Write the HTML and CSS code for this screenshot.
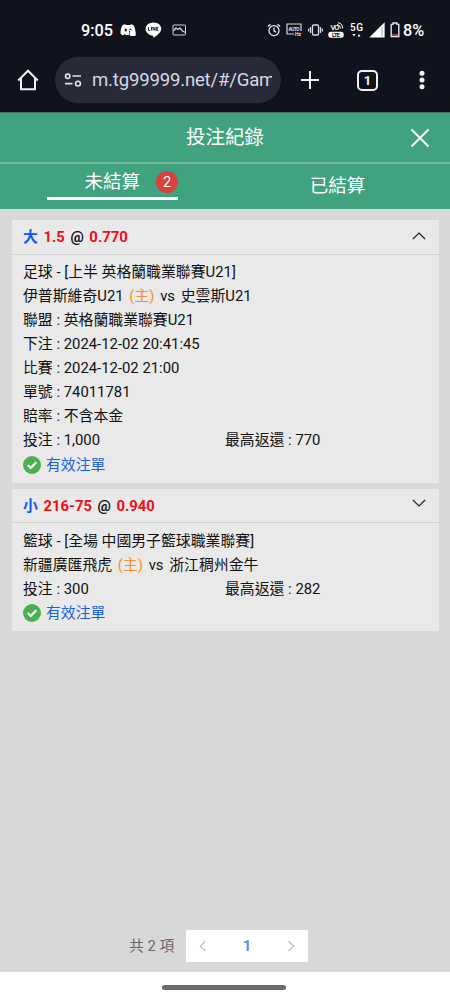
FILE: index.html
```html
<!DOCTYPE html>
<html lang="zh-Hant">
<head>
<meta charset="utf-8">
<meta name="viewport" content="width=device-width, initial-scale=1">
<title>投注紀錄</title>
<link rel="stylesheet" href="styles.css">
</head>
<body>
<div class="screen">
  <div class="status">
    <div class="status-left">
      <span class="clock">9:05</span>
      <svg class="i-discord" width="16" height="14" viewBox="0 0 16 14"><path d="M5 1.200 6 2h4l1-.8 2.400.9C14.600 4 15.300 6 15.300 8H9v4H6L4.500 11 3 12.500.600 11C.300 7.500 1.200 4.500 2.600 2.100Z" fill="#fff"/><ellipse cx="5.700" cy="7" rx="1.200" ry="1.500" fill="#11131c"/><path d="M9 7.200a1.300 1.300 0 0 1 2.500 0" fill="none" stroke="#11131c"/><rect x="9.700" y="8" width="6" height="5" rx="1" fill="#fff"/></svg>
      <svg class="i-line" width="17" height="16" viewBox="0 0 17 16"><path d="M8.500.400C13 .400 16.300 3.200 16.300 6.800c0 3.500-4.200 6.500-7.500 8.800-.6.300-.7-.4-.5-1.900C4 13.500.600 10.600.600 6.800.600 3.200 4.100.400 8.500.400Z" fill="#fff"/><path d="M3.500 5v3.500h1.700M6.500 5v3.500M8 8.500V5l2 3.500V5M13.300 5.200h-1.700v3.200h1.700M11.600 6.800h1.500" fill="none" stroke="#11131c" stroke-width=".9"/></svg>
      <svg class="i-pic" width="15" height="12" viewBox="0 0 15 12" fill="none" stroke="#cfd0d6"><rect x="1" y="1" width="12.500" height="10" rx=".8"/><path d="m1.500 7 2.500-3 2 1.500L8 4l2.500 3 3 1.500" stroke-width="1.300"/></svg>
    </div>
    <div class="status-right">
      <svg class="i-alarm" width="14" height="14" viewBox="0 0 14 14" fill="none" stroke="#e8e9ee" stroke-width="1.300"><circle cx="7" cy="7.600" r="5"/><path d="M7 4.500v3.400l2 1.200M.900 3.500 3.500 1.200M13.100 3.500 10.500 1.200"/></svg>
      <svg class="i-auto" width="16" height="14" viewBox="0 0 16 14"><path d="M8 11H1V1h14v7" fill="none" stroke="#d8d9df" stroke-width="1.200"/><text x="2.500" y="7.500" font-size="4.600" textLength="11">AUTO</text><text x="9" y="13" font-size="5" textLength="6">Hz</text></svg>
      <svg class="i-vib" width="15" height="12" viewBox="0 0 15 12" fill="none" stroke="#d8d9df" stroke-width="1.300"><rect x="4.500" y="1" width="6" height="10" rx="1"/><path d="M2.600 3v6M12.400 3v6M.700 4.500v3M14.300 4.500v3"/></svg>
      <svg class="i-volte" width="16" height="17" viewBox="0 0 16 17"><text x="2.500" y="8" font-size="7.500" textLength="9">VO</text><path d="M9 2.500a4 4 0 0 1 3.500 4M10 .700a5.500 5.500 0 0 1 4.500 5.800" fill="none" stroke="#fff"/><rect x=".3" y="9.700" width="15.400" height="6" rx="2.500" fill="#fff"/><text x="4" y="15" font-size="5.600" class="dark" textLength="8">LTE</text></svg>
      <svg class="i-5g" width="15" height="16" viewBox="0 0 15 16"><text x="1" y="9" font-size="10" textLength="13">5G</text><path d="M3.500 12h3L5 14.500ZM8.500 14.500h3L10 12Z" fill="#fff"/></svg>
      <svg class="i-signal" width="16" height="16" viewBox="0 0 16 16"><path d="M.3 15.500 15.600.300v15.200Z" fill="#fff"/><path d="M13 5v9.500" stroke="#8f9097" stroke-width=".8"/></svg>
      <svg class="i-batt" width="10" height="16" viewBox="0 0 10 16"><path d="M3 2.400V1h4v1.400h1.800v12.200H1.200V2.400Z" fill="none" stroke="#e4e4e8" stroke-width="1.400"/><path d="M2 13h6" stroke="#b7623e" stroke-width="1.500"/></svg>
      <span class="pct">8%</span>
    </div>
  </div>
  <div class="browser">
    <svg class="i-home" width="22" height="22" viewBox="0 0 22 22" fill="none" stroke="#f1f1f3" stroke-width="2"><path d="M1.200 11.500 11 1.700l9.800 9.800M4 9v11.300h14V9"/></svg>
    <div class="url">
      <svg width="18" height="14" viewBox="0 0 18 14" fill="none" stroke="#e3e4ea" stroke-width="1.600"><circle cx="3.700" cy="3.300" r="2.200"/><path d="M8.500 3H17M1 10.600h7.500"/><circle cx="14" cy="10.600" r="2.400"/></svg>
      <span class="url-text">m.tg99999.net/#/Gam</span>
    </div>
    <svg class="i-plus" width="18" height="18" viewBox="0 0 18 18"><path d="M9 0v18M0 9h18" stroke="#f1f1f3" stroke-width="2"/></svg>
    <span class="tabcount">1</span>
    <svg class="i-more" width="6" height="20" viewBox="0 0 6 20" fill="#f1f1f3"><circle cx="3" cy="3.300" r="2.500"/><circle cx="3" cy="10" r="2.500"/><circle cx="3" cy="16.700" r="2.500"/></svg>
  </div>
  <header class="title">
    <h1>投注紀錄</h1>
    <svg class="close" width="20" height="20" viewBox="0 0 20 20"><path d="m1.500 1.500 17 17M18.500 1.500l-17 17" stroke="#fff" stroke-width="1.900"/></svg>
  </header>
  <nav class="tabs">
    <div class="tab active"><div class="tab-inner"><span>未結算</span><span class="badge">2</span></div></div>
    <div class="tab"><span>已結算</span></div>
  </nav>
  <main class="content">
    <section class="card first">
      <div class="head"><div><b class="blue">大</b> <b class="red">1.5</b> <b>@</b> <b class="red">0.770</b></div>
        <svg width="14" height="8" viewBox="0 0 14 8"><path d="M.900 7 7 1.100 13.100 7" fill="none" stroke="#222" stroke-width="1.200"/></svg></div>
      <div class="body">
        <p>足球 - [上半 英格蘭職業聯賽U21]</p>
        <p class="match">伊普斯維奇U21 <span class="orange">(主)</span> vs 史雲斯U21</p>
        <p>聯盟 : 英格蘭職業聯賽U21</p>
        <p>下注 : 2024-12-02 20:41:45</p>
        <p>比賽 : 2024-12-02 21:00</p>
        <p>單號 : 74011781</p>
        <p>賠率 : 不含本金</p>
        <div class="cols"><p>投注 : 1,000</p><p>最高返還 : 770</p></div>
        <div class="valid"><svg width="18" height="18" viewBox="0 0 18 18"><circle cx="9" cy="9" r="9" fill="#4caf50"/><path d="m4.700 9 3 3 5.600-5.800" fill="none" stroke="#fff" stroke-width="2.200"/></svg><span>有效注單</span></div>
      </div>
    </section>
    <section class="card second">
      <div class="head"><div><b class="blue">小</b> <b class="red">216-75</b> <b>@</b> <b class="red">0.940</b></div>
        <svg width="14" height="8" viewBox="0 0 14 8"><path d="M.900 1 7 6.900 13.100 1" fill="none" stroke="#222" stroke-width="1.200"/></svg></div>
      <div class="body">
        <p>籃球 - [全場 中國男子籃球職業聯賽]</p>
        <p class="match">新疆廣匯飛虎 <span class="orange">(主)</span> vs 浙江稠州金牛</p>
        <div class="cols"><p>投注 : 300</p><p>最高返還 : 282</p></div>
        <div class="valid"><svg width="18" height="18" viewBox="0 0 18 18"><circle cx="9" cy="9" r="9" fill="#4caf50"/><path d="m4.700 9 3 3 5.600-5.800" fill="none" stroke="#fff" stroke-width="2.200"/></svg><span>有效注單</span></div>
      </div>
    </section>
    <div class="pagination">
      <span class="total">共 2 項</span>
      <div class="pager">
        <svg width="8" height="12" viewBox="0 0 8 12"><path d="M6.500 1 1.500 6l5 5" fill="none" stroke="#c0c4cc" stroke-width="1.500"/></svg>
        <b>1</b>
        <svg width="8" height="12" viewBox="0 0 8 12"><path d="m1.500 1 5 5-5 5" fill="none" stroke="#c0c4cc" stroke-width="1.500"/></svg>
      </div>
    </div>
  </main>
  <div class="gesture"><div class="handle"></div></div>
</div>
</body>
</html>
```

FILE: styles.css
```css
* { box-sizing: border-box; }
body { margin: 0; font-family: Roboto, "Noto Sans CJK TC", sans-serif; color: #111; }
p, h1 { margin: 0; }
svg { display: block; flex: none; }
svg text { fill: #fff; font-weight: 500; }
svg text.dark { fill: #11131c; font-weight: 700; }
.screen { width: 450px; height: 1000px; display: flex; flex-direction: column; overflow: hidden; }

.status { height: 50px; padding: 10px 25px 0 81px; background: #11131c; color: #fff; display: flex; justify-content: space-between; }
.status-left, .status-right { display: flex; align-items: center; height: 40px; }
.clock, .pct { font-size: 16.300px; font-weight: 500; line-height: 20px; padding-top: 1px; }
.clock { width: 32px; }
.i-discord { margin-left: 7px; }
.i-line { margin-left: 9px; }
.i-pic { margin-left: 10px; }
.i-auto { margin-left: 5px; }
.i-vib { margin-left: 6px; }
.i-volte { margin-left: 5px; }
.i-5g { margin-left: 5px; }
.i-signal { margin-left: 5px; }
.i-batt { margin-left: 5px; }
.pct { width: 22px; margin-left: 3px; }

.browser { height: 62px; padding: 0 25px 2px 17px; background: #11131c; display: flex; align-items: center; }
.url { width: 226px; flex: none; height: 46px; margin-left: 16px; padding: 0 9px; border-radius: 23px; background: #282a37; display: flex; align-items: center; gap: 10px; }
.url-text { flex: 1; overflow: hidden; white-space: nowrap; font-size: 18.600px; letter-spacing: -.2px; line-height: 26px; color: #d5d8e4; }
.i-plus { margin-left: 20px; }
.tabcount { flex: none; width: 21px; height: 21px; margin-left: 38px; border: 2px solid #f1f1f3; border-radius: 5px; color: #f1f1f3; font-size: 13px; font-weight: 700; line-height: 17px; text-align: center; }
.i-more { margin-left: 41px; }

.title { height: 52px; padding: 0 19px 0 186px; background: #41a27f; border-top: 1px solid #3a6f61; border-bottom: 2px solid #71b79d; display: flex; align-items: center; justify-content: space-between; color: #fff; }
.title h1 { font-size: 19.500px; font-weight: 400; line-height: 28px; }
.title .close { margin-right: 1px; }
.tabs { height: 45px; background: #41a27f; color: #fff; display: flex; font-size: 18.500px; }
.tab { flex: 1; display: flex; justify-content: center; line-height: 44px; }
.tab.active { padding-top: 1px; }
.tab-inner { width: 131px; height: 35px; border-bottom: 3px solid #fff; display: flex; align-items: center; justify-content: flex-end; gap: 16px; line-height: 32px; }
.tab-inner > span:first-child { padding-top: 1px; }
.badge { width: 22px; height: 22px; border-radius: 50%; background: #d9413c; font-size: 14.500px; line-height: 23px; text-align: center; margin-top: 2px; }

.content { flex: 1; min-height: 0; padding: 11px 11px 0 12px; background: #d8d8d8; display: flex; flex-direction: column; }
.card { background: #e9e9e9; margin-bottom: 6px; font-size: 14.860px; line-height: 24px; }
.first { height: 263px; }
.second { height: 142px; }
.head { height: 34px; padding: 0 13px 0 11px; border-bottom: 1px solid #d2d2d2; display: flex; align-items: center; justify-content: space-between; word-spacing: 1.900px; }
.head svg { margin-bottom: 3px; }
.second .head svg { margin-bottom: 5px; }
.first .head { height: 35px; }
.body { padding: 6px 11px 0; white-space: nowrap; }
.first .body { padding-top: 5px; }
.match { word-spacing: 2px; }
.cols { display: grid; grid-template-columns: 202px 1fr; }
.valid { height: 26px; display: flex; align-items: center; gap: 5px; color: #1a62dd; }
.second .valid { height: 24px; }
.blue { color: #1458e8; }
.red { color: #f20d17; }
.orange { color: #f79328; }

.pagination { margin-top: auto; height: 32px; margin-bottom: 10px; padding-left: 117px; display: flex; align-items: center; gap: 11px; }
.total { color: #66686c; font-size: 14.800px; line-height: 22px; width: 46px; white-space: nowrap; }
.pager { width: 122px; height: 32px; padding: 0 13px; background: #fff; display: flex; align-items: center; justify-content: space-between; font-size: 15px; color: #5298ee; }
.gesture { height: 28px; padding-top: 13px; background: #fff; display: flex; justify-content: center; }
.handle { width: 124px; height: 5px; border-radius: 3px; background: #6b6b6b; margin-right: 3px; }
```
